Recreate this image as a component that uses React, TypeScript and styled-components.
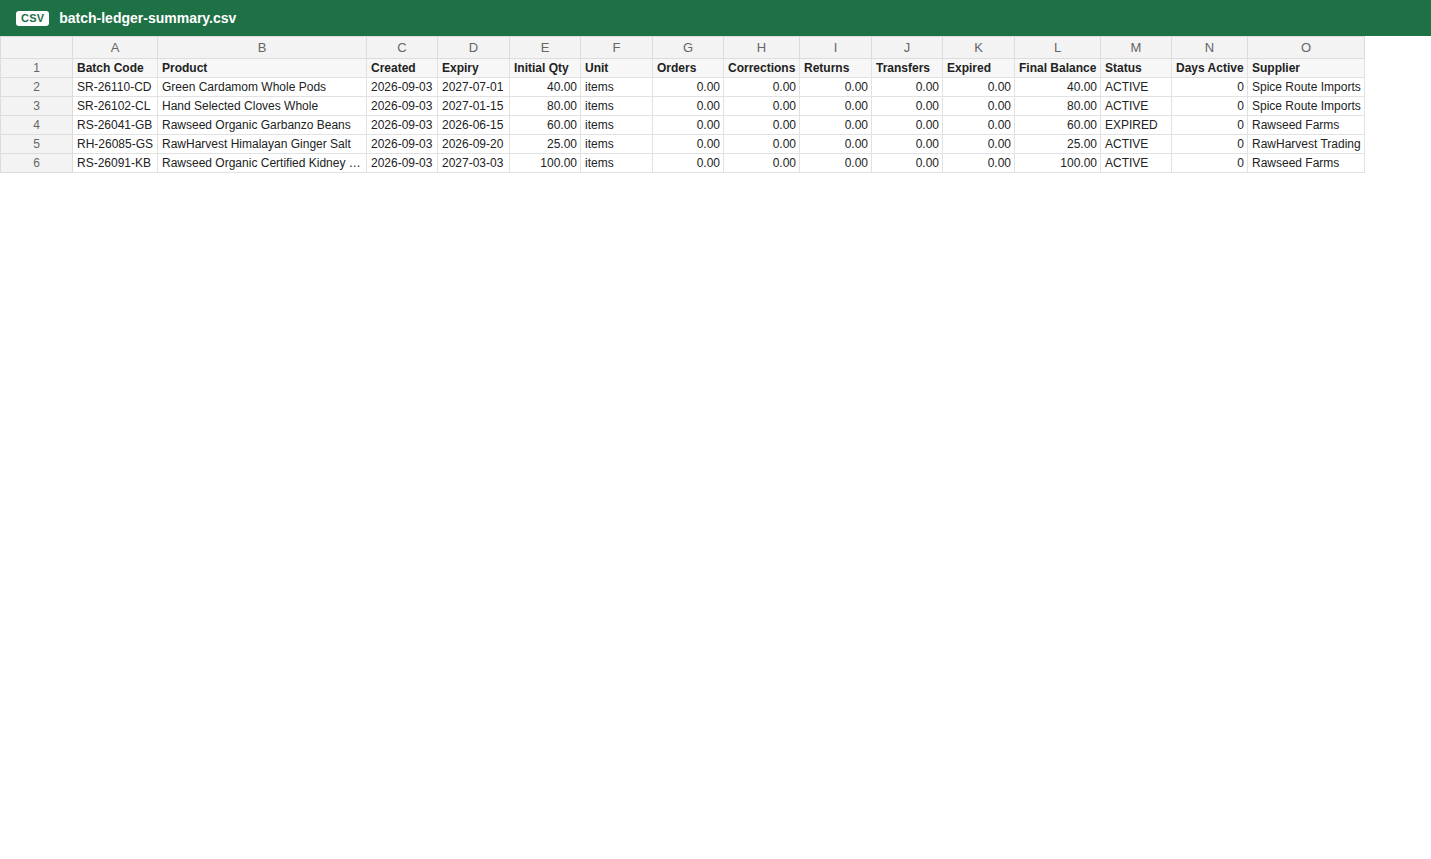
import React from "react";
import styled, { createGlobalStyle } from "styled-components";

const Global = createGlobalStyle`
  html, body { margin: 0; padding: 0; background: #ffffff; }
  body { font-family: "Liberation Sans", Arial, sans-serif; }
`;

const Page = styled.div`
  display: flex;
  flex-direction: column;
  width: 1431px;
  min-height: 859px;
  background: #fff;
`;

const TitleBar = styled.header`
  display: flex;
  align-items: center;
  gap: 10px;
  height: 36px;
  padding: 0 16px;
  box-sizing: border-box;
  background: #1e7045;
`;

const Badge = styled.span`
  display: inline-flex;
  align-items: center;
  justify-content: center;
  height: 15px;
  padding: 0 5px;
  border-radius: 3px;
  background: #fff;
  color: #1e7045;
  font-size: 11px;
  font-weight: 700;
  letter-spacing: 0.2px;
`;

const Title = styled.span`
  color: #fff;
  font-size: 14px;
  font-weight: 700;
`;

const Sheet = styled.table`
  border-collapse: collapse;
  table-layout: fixed;
  width: 1364px;
  font-size: 12px;
  color: #222;
`;

const Cell = styled.td<{ $align?: "left" | "right" | "center"; $bold?: boolean; $gray?: boolean }>`
  padding: 0 3px 0 4px;
  line-height: 18px;
  border: 1px solid #e2e2e2;
  text-align: ${(p) => p.$align ?? "left"};
  font-weight: ${(p) => (p.$bold ? 700 : 400)};
  background: ${(p) => (p.$gray ? "#f7f7f7" : "#fff")};
  white-space: nowrap;
  overflow: hidden;
  text-overflow: clip;
`;

const TruncCell = styled(Cell)`
  text-overflow: ellipsis;
`;

const ColHead = styled.th`
  padding: 0 2px;
  line-height: 21px;
  border: 1px solid #dcdcdc;
  background: #f3f3f3;
  color: #666;
  font-weight: 400;
  font-size: 13px;
  text-align: center;
`;

const RowNum = styled.td`
  line-height: 18px;
  padding: 0;
  border: 1px solid #dcdcdc;
  background: #f3f3f3;
  color: #666;
  text-align: center;
  font-size: 12px;
`;

const widths = [72, 85, 209, 71, 72, 71, 72, 71, 76, 72, 71, 72, 86, 71, 76, 117];
const letters = "ABCDEFGHIJKLMNO".split("");
const headers = [
  "Batch Code", "Product", "Created", "Expiry", "Initial Qty", "Unit", "Orders",
  "Corrections", "Returns", "Transfers", "Expired", "Final Balance", "Status", "Days Active", "Supplier",
];
const rightCols = new Set([4, 6, 7, 8, 9, 10, 11, 13]);

const rows: string[][] = [
  ["SR-26110-CD", "Green Cardamom Whole Pods", "2026-09-03", "2027-07-01", "40.00", "items", "0.00", "0.00", "0.00", "0.00", "0.00", "40.00", "ACTIVE", "0", "Spice Route Imports"],
  ["SR-26102-CL", "Hand Selected Cloves Whole", "2026-09-03", "2027-01-15", "80.00", "items", "0.00", "0.00", "0.00", "0.00", "0.00", "80.00", "ACTIVE", "0", "Spice Route Imports"],
  ["RS-26041-GB", "Rawseed Organic Garbanzo Beans", "2026-09-03", "2026-06-15", "60.00", "items", "0.00", "0.00", "0.00", "0.00", "0.00", "60.00", "EXPIRED", "0", "Rawseed Farms"],
  ["RH-26085-GS", "RawHarvest Himalayan Ginger Salt", "2026-09-03", "2026-09-20", "25.00", "items", "0.00", "0.00", "0.00", "0.00", "0.00", "25.00", "ACTIVE", "0", "RawHarvest Trading"],
  ["RS-26091-KB", "Rawseed Organic Certified Kidney Beans", "2026-09-03", "2027-03-03", "100.00", "items", "0.00", "0.00", "0.00", "0.00", "0.00", "100.00", "ACTIVE", "0", "Rawseed Farms"],
];

export default function App() {
  return (
    <Page>
      <Global />
      <TitleBar>
        <Badge>CSV</Badge>
        <Title>batch-ledger-summary.csv</Title>
      </TitleBar>
      <Sheet>
        <colgroup>
          {widths.map((w, i) => (
            <col key={i} style={{ width: w }} />
          ))}
        </colgroup>
        <thead>
          <tr>
            <ColHead />
            {letters.map((l) => (
              <ColHead key={l}>{l}</ColHead>
            ))}
          </tr>
        </thead>
        <tbody>
          <tr>
            <RowNum>1</RowNum>
            {headers.map((h) => (
              <Cell key={h} $bold $gray>
                {h}
              </Cell>
            ))}
          </tr>
          {rows.map((r, ri) => (
            <tr key={ri}>
              <RowNum>{ri + 2}</RowNum>
              {r.map((v, ci) =>
                ci === 1 ? (
                  <TruncCell key={ci}>{v}</TruncCell>
                ) : (
                  <Cell key={ci} $align={rightCols.has(ci) ? "right" : "left"}>
                    {v}
                  </Cell>
                )
              )}
            </tr>
          ))}
        </tbody>
      </Sheet>
    </Page>
  );
}
